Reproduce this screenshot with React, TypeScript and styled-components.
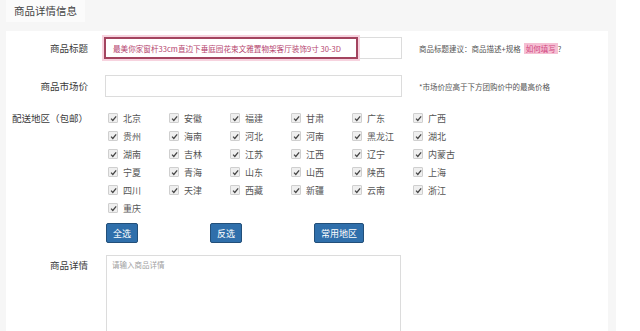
import React from "react";
import styled, {createGlobalStyle} from "styled-components";

const GlobalStyle = createGlobalStyle`
    html, body {
        margin: 0;
        padding: 0;
        background: #ffffff;
    }
    body {
        font-family: "Noto Sans CJK SC", "Noto Sans", "Liberation Sans", sans-serif;
        color: #333;
    }
`;

const regions = [
    "北京", "安徽", "福建", "甘肃", "广东", "广西",
    "贵州", "海南", "河北", "河南", "黑龙江", "湖北",
    "湖南", "吉林", "江苏", "江西", "辽宁", "内蒙古",
    "宁夏", "青海", "山东", "山西", "陕西", "上海",
    "四川", "天津", "西藏", "新疆", "云南", "浙江",
    "重庆",
];

const Frame = styled.div`
    width: 602px;
    min-height: 100vh;
    padding: 0 8px 0 6px;
    background: #f6f6f6;
    display: flex;
    flex-direction: column;
`;

const Header = styled.div`
    height: 31px;
    display: flex;
    align-items: flex-start;
`;

const Tab = styled.div`
    height: 22px;
    line-height: 22px;
    padding: 0 8px;
    font-size: 10.5px;
    color: #444;
    background: #fbfbfb;
`;

const Panel = styled.div`
    flex: 1;
    background: #ffffff;
    padding-top: 6px;
`;

const Form = styled.div`
    display: grid;
    grid-template-columns: 82px 297px auto;
    column-gap: 17px;
`;

const Label = styled.div<{ $top?: number }>`
    font-size: 9.5px;
    color: #3a3a3a;
    text-align: right;
    line-height: 18px;
    padding-top: ${p => p.$top ?? 0}px;
    white-space: nowrap;
`;

const Cell = styled.div<{ $gap?: number }>`
    margin-bottom: ${p => p.$gap ?? 0}px;
`;

const Field = styled.div`
    height: 22px;
    box-sizing: border-box;
    border: 1px solid #dcdcdc;
    display: flex;
    align-items: stretch;
    background: #fff;
`;

const Highlight = styled.div`
    width: 254px;
    margin: -1px 0 -1px -2px;
    box-sizing: border-box;
    border: 2px solid #a3445f;
    box-shadow: 0 0 0 2px #f7d3df;
    display: flex;
    align-items: center;
    padding-left: 7px;
    font-size: 7.6px;
    color: #b5446e;
    white-space: nowrap;
    overflow: hidden;
`;

const Hint = styled.div`
    font-size: 7.5px;
    color: #555;
    height: 22px;
    display: flex;
    align-items: center;
    white-space: nowrap;
`;

const Mark = styled.span`
    background: #f5bfd3;
    color: #d1457f;
    padding: 0 2px;
    margin-left: 3px;
`;

const RegionGrid = styled.div`
    display: grid;
    grid-template-columns: repeat(6, 61px);
    grid-auto-rows: 18px;
    padding-left: 3px;
    margin-top: 1px;
`;

const Region = styled.label`
    display: flex;
    align-items: center;
    gap: 5px;
    font-size: 9px;
    color: #555;
    white-space: nowrap;
`;

const Box = styled.span`
    width: 8px;
    height: 8px;
    border: 1px solid #cfcfcf;
    background: #efefef;
    border-radius: 1px;
    display: inline-flex;
    align-items: center;
    justify-content: center;
`;

const Buttons = styled.div`
    display: flex;
    gap: 72px;
    padding-left: 1px;
    margin-top: 6px;
    margin-bottom: 12px;
`;

const Button = styled.button`
    height: 20px;
    padding: 0 6px;
    font-family: inherit;
    font-size: 9px;
    color: #fff;
    background: #2f6fab;
    border: 1px solid #224f79;
    border-radius: 2px;
`;

const TextArea = styled.textarea`
    width: 295px;
    height: 80px;
    margin-left: 1px;
    box-sizing: border-box;
    border: 1px solid #dcdcdc;
    padding: 3px 5px;
    font-family: inherit;
    font-size: 7.5px;
    resize: none;
    outline: none;
    &::placeholder {
        color: #a0a0a0;
    }
`;

const Check = () => (
    <Box>
        <svg width="7" height="7" viewBox="0 0 10 10">
            <path d="M1.5 5.2 L4 7.8 L8.8 2" fill="none" stroke="#444" strokeWidth="1.8"/>
        </svg>
    </Box>
);

export default function App() {
    return (
        <>
            <GlobalStyle/>
            <Frame>
                <Header>
                    <Tab>商品详情信息</Tab>
                </Header>
                <Panel>
                    <Form>
                        {/* title */}
                        <Label $top={2}>商品标题</Label>
                        <Cell $gap={16}>
                            <Field>
                                <Highlight>最美你家窗杆33cm直边下垂庭园花束文雅置物架客厅装饰9寸 30-3D</Highlight>
                            </Field>
                        </Cell>
                        <Hint>商品标题建议：商品描述+规格<Mark>如何填写</Mark>?</Hint>

                        {/* market price */}
                        <Label $top={2}>商品市场价</Label>
                        <Cell $gap={11}>
                            <Field/>
                        </Cell>
                        <Hint>*市场价应高于下方团购价中的最高价格</Hint>

                        {/* regions */}
                        <Label $top={1}>配送地区（包邮）</Label>
                        <Cell>
                            <RegionGrid>
                                {regions.map(name => (
                                    <Region key={name}>
                                        <Check/>
                                        {name}
                                    </Region>
                                ))}
                            </RegionGrid>
                        </Cell>
                        <div/>

                        <div/>
                        <Buttons>
                            <Button>全选</Button>
                            <Button>反选</Button>
                            <Button>常用地区</Button>
                        </Buttons>
                        <div/>

                        {/* detail */}
                        <Label $top={1}>商品详情</Label>
                        <Cell>
                            <TextArea placeholder="请输入商品详情"/>
                        </Cell>
                        <div/>
                    </Form>
                </Panel>
            </Frame>
        </>
    );
}
